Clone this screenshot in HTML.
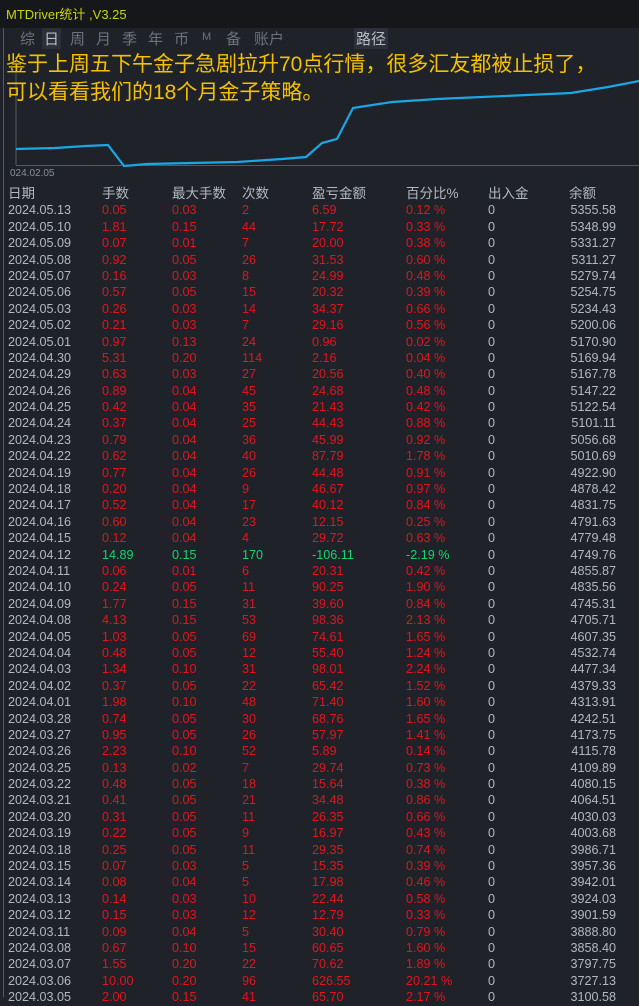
<!DOCTYPE html><html><head><meta charset="utf-8"><style>
body{margin:0;width:639px;height:997px;overflow:hidden;background:#1f2329;font-family:"Liberation Sans","Noto Sans CJK SC",sans-serif;position:relative}
.top{position:absolute;left:0;top:0;width:639px;height:28px;background:#15171b}
.ttl{position:absolute;left:6px;top:4px;font-size:13px;color:#c9d40a}
.tabs{position:absolute;left:20px;top:28px;font-size:15px;color:#6d727b}
.tabs span{position:absolute;top:0;white-space:nowrap}
.box{background:#2c3139;padding:0 2px;color:#b8bcc4}
.ov{position:absolute;left:6px;top:51px;font-size:21px;line-height:28px;color:#f5c000;white-space:nowrap}
.lbl{position:absolute;left:10px;top:168px;font-size:10px;color:#8a8f97}
.rows{position:absolute;left:0;top:186px;width:639px;font-size:12.6px}
.r{height:16.4px;line-height:16.4px;position:relative;color:#e3141c}
.r span{position:absolute;top:0}
.r .d{left:8px;color:#b3b8c0}.r .a{left:102px}.r .b{left:172px}.r .c{left:242px}.r .e{left:312px}.r .f{left:406px}.r .g{left:488px;color:#b3b8c0}.r .h{right:23px;color:#b3b8c0}
.hd{color:#b3b8c0;font-size:13.5px}.hd span{color:#b3b8c0}
.gr{color:#19d36b}
.lft{position:absolute;left:3px;top:28px;width:1px;height:969px;background:#55595f}
</style></head><body>
<div class="top"><div class="ttl">MTDriver统计 ,V3.25</div></div>
<div class="tabs"><span style="left:0">综</span><span class="box" style="left:22px">日</span><span style="left:50px">周</span><span style="left:76px">月</span><span style="left:102px">季</span><span style="left:128px">年</span><span style="left:154px">币</span><span style="left:182px;font-size:11px;top:3px">M</span><span style="left:206px">备</span><span style="left:234px">账户</span><span class="box" style="left:334px">路径</span></div>
<div class="lft"></div>
<svg style="position:absolute;left:0;top:0" width="639" height="180">
<line x1="16" y1="60" x2="16" y2="165" stroke="#555a62"/>
<line x1="16" y1="165.5" x2="639" y2="165.5" stroke="#555a62"/>
<polyline fill="none" stroke="#1aa7e6" stroke-width="2.2" points="16,149 55,148 86,146 108,145 124,166 147,164 192,163 237,162 282,159 306,157 322,143 337,139 353,108 392,102 437,99 482,97 527,95 571,93 608,87 639,81"/>
</svg>
<div class="ov">鉴于上周五下午金子急剧拉升70点行情，很多汇友都被止损了，<br>可以看看我们的18个月金子策略。</div>
<div class="lbl">024.02.05</div>
<div class="rows">
<div class="r hd"><span class="d">日期</span><span class="a">手数</span><span class="b">最大手数</span><span class="c">次数</span><span class="e">盈亏金额</span><span class="f">百分比%</span><span class="g">出入金</span><span style="left:569px">余额</span></div>
<div class="r"><span class="d">2024.05.13</span><span class="a">0.05</span><span class="b">0.03</span><span class="c">2</span><span class="e">6.59</span><span class="f">0.12 %</span><span class="g">0</span><span class="h">5355.58</span></div>
<div class="r"><span class="d">2024.05.10</span><span class="a">1.81</span><span class="b">0.15</span><span class="c">44</span><span class="e">17.72</span><span class="f">0.33 %</span><span class="g">0</span><span class="h">5348.99</span></div>
<div class="r"><span class="d">2024.05.09</span><span class="a">0.07</span><span class="b">0.01</span><span class="c">7</span><span class="e">20.00</span><span class="f">0.38 %</span><span class="g">0</span><span class="h">5331.27</span></div>
<div class="r"><span class="d">2024.05.08</span><span class="a">0.92</span><span class="b">0.05</span><span class="c">26</span><span class="e">31.53</span><span class="f">0.60 %</span><span class="g">0</span><span class="h">5311.27</span></div>
<div class="r"><span class="d">2024.05.07</span><span class="a">0.16</span><span class="b">0.03</span><span class="c">8</span><span class="e">24.99</span><span class="f">0.48 %</span><span class="g">0</span><span class="h">5279.74</span></div>
<div class="r"><span class="d">2024.05.06</span><span class="a">0.57</span><span class="b">0.05</span><span class="c">15</span><span class="e">20.32</span><span class="f">0.39 %</span><span class="g">0</span><span class="h">5254.75</span></div>
<div class="r"><span class="d">2024.05.03</span><span class="a">0.26</span><span class="b">0.03</span><span class="c">14</span><span class="e">34.37</span><span class="f">0.66 %</span><span class="g">0</span><span class="h">5234.43</span></div>
<div class="r"><span class="d">2024.05.02</span><span class="a">0.21</span><span class="b">0.03</span><span class="c">7</span><span class="e">29.16</span><span class="f">0.56 %</span><span class="g">0</span><span class="h">5200.06</span></div>
<div class="r"><span class="d">2024.05.01</span><span class="a">0.97</span><span class="b">0.13</span><span class="c">24</span><span class="e">0.96</span><span class="f">0.02 %</span><span class="g">0</span><span class="h">5170.90</span></div>
<div class="r"><span class="d">2024.04.30</span><span class="a">5.31</span><span class="b">0.20</span><span class="c">114</span><span class="e">2.16</span><span class="f">0.04 %</span><span class="g">0</span><span class="h">5169.94</span></div>
<div class="r"><span class="d">2024.04.29</span><span class="a">0.63</span><span class="b">0.03</span><span class="c">27</span><span class="e">20.56</span><span class="f">0.40 %</span><span class="g">0</span><span class="h">5167.78</span></div>
<div class="r"><span class="d">2024.04.26</span><span class="a">0.89</span><span class="b">0.04</span><span class="c">45</span><span class="e">24.68</span><span class="f">0.48 %</span><span class="g">0</span><span class="h">5147.22</span></div>
<div class="r"><span class="d">2024.04.25</span><span class="a">0.42</span><span class="b">0.04</span><span class="c">35</span><span class="e">21.43</span><span class="f">0.42 %</span><span class="g">0</span><span class="h">5122.54</span></div>
<div class="r"><span class="d">2024.04.24</span><span class="a">0.37</span><span class="b">0.04</span><span class="c">25</span><span class="e">44.43</span><span class="f">0.88 %</span><span class="g">0</span><span class="h">5101.11</span></div>
<div class="r"><span class="d">2024.04.23</span><span class="a">0.79</span><span class="b">0.04</span><span class="c">36</span><span class="e">45.99</span><span class="f">0.92 %</span><span class="g">0</span><span class="h">5056.68</span></div>
<div class="r"><span class="d">2024.04.22</span><span class="a">0.62</span><span class="b">0.04</span><span class="c">40</span><span class="e">87.79</span><span class="f">1.78 %</span><span class="g">0</span><span class="h">5010.69</span></div>
<div class="r"><span class="d">2024.04.19</span><span class="a">0.77</span><span class="b">0.04</span><span class="c">26</span><span class="e">44.48</span><span class="f">0.91 %</span><span class="g">0</span><span class="h">4922.90</span></div>
<div class="r"><span class="d">2024.04.18</span><span class="a">0.20</span><span class="b">0.04</span><span class="c">9</span><span class="e">46.67</span><span class="f">0.97 %</span><span class="g">0</span><span class="h">4878.42</span></div>
<div class="r"><span class="d">2024.04.17</span><span class="a">0.52</span><span class="b">0.04</span><span class="c">17</span><span class="e">40.12</span><span class="f">0.84 %</span><span class="g">0</span><span class="h">4831.75</span></div>
<div class="r"><span class="d">2024.04.16</span><span class="a">0.60</span><span class="b">0.04</span><span class="c">23</span><span class="e">12.15</span><span class="f">0.25 %</span><span class="g">0</span><span class="h">4791.63</span></div>
<div class="r"><span class="d">2024.04.15</span><span class="a">0.12</span><span class="b">0.04</span><span class="c">4</span><span class="e">29.72</span><span class="f">0.63 %</span><span class="g">0</span><span class="h">4779.48</span></div>
<div class="r gr"><span class="d">2024.04.12</span><span class="a">14.89</span><span class="b">0.15</span><span class="c">170</span><span class="e">-106.11</span><span class="f">-2.19 %</span><span class="g">0</span><span class="h">4749.76</span></div>
<div class="r"><span class="d">2024.04.11</span><span class="a">0.06</span><span class="b">0.01</span><span class="c">6</span><span class="e">20.31</span><span class="f">0.42 %</span><span class="g">0</span><span class="h">4855.87</span></div>
<div class="r"><span class="d">2024.04.10</span><span class="a">0.24</span><span class="b">0.05</span><span class="c">11</span><span class="e">90.25</span><span class="f">1.90 %</span><span class="g">0</span><span class="h">4835.56</span></div>
<div class="r"><span class="d">2024.04.09</span><span class="a">1.77</span><span class="b">0.15</span><span class="c">31</span><span class="e">39.60</span><span class="f">0.84 %</span><span class="g">0</span><span class="h">4745.31</span></div>
<div class="r"><span class="d">2024.04.08</span><span class="a">4.13</span><span class="b">0.15</span><span class="c">53</span><span class="e">98.36</span><span class="f">2.13 %</span><span class="g">0</span><span class="h">4705.71</span></div>
<div class="r"><span class="d">2024.04.05</span><span class="a">1.03</span><span class="b">0.05</span><span class="c">69</span><span class="e">74.61</span><span class="f">1.65 %</span><span class="g">0</span><span class="h">4607.35</span></div>
<div class="r"><span class="d">2024.04.04</span><span class="a">0.48</span><span class="b">0.05</span><span class="c">12</span><span class="e">55.40</span><span class="f">1.24 %</span><span class="g">0</span><span class="h">4532.74</span></div>
<div class="r"><span class="d">2024.04.03</span><span class="a">1.34</span><span class="b">0.10</span><span class="c">31</span><span class="e">98.01</span><span class="f">2.24 %</span><span class="g">0</span><span class="h">4477.34</span></div>
<div class="r"><span class="d">2024.04.02</span><span class="a">0.37</span><span class="b">0.05</span><span class="c">22</span><span class="e">65.42</span><span class="f">1.52 %</span><span class="g">0</span><span class="h">4379.33</span></div>
<div class="r"><span class="d">2024.04.01</span><span class="a">1.98</span><span class="b">0.10</span><span class="c">48</span><span class="e">71.40</span><span class="f">1.60 %</span><span class="g">0</span><span class="h">4313.91</span></div>
<div class="r"><span class="d">2024.03.28</span><span class="a">0.74</span><span class="b">0.05</span><span class="c">30</span><span class="e">68.76</span><span class="f">1.65 %</span><span class="g">0</span><span class="h">4242.51</span></div>
<div class="r"><span class="d">2024.03.27</span><span class="a">0.95</span><span class="b">0.05</span><span class="c">26</span><span class="e">57.97</span><span class="f">1.41 %</span><span class="g">0</span><span class="h">4173.75</span></div>
<div class="r"><span class="d">2024.03.26</span><span class="a">2.23</span><span class="b">0.10</span><span class="c">52</span><span class="e">5.89</span><span class="f">0.14 %</span><span class="g">0</span><span class="h">4115.78</span></div>
<div class="r"><span class="d">2024.03.25</span><span class="a">0.13</span><span class="b">0.02</span><span class="c">7</span><span class="e">29.74</span><span class="f">0.73 %</span><span class="g">0</span><span class="h">4109.89</span></div>
<div class="r"><span class="d">2024.03.22</span><span class="a">0.48</span><span class="b">0.05</span><span class="c">18</span><span class="e">15.64</span><span class="f">0.38 %</span><span class="g">0</span><span class="h">4080.15</span></div>
<div class="r"><span class="d">2024.03.21</span><span class="a">0.41</span><span class="b">0.05</span><span class="c">21</span><span class="e">34.48</span><span class="f">0.86 %</span><span class="g">0</span><span class="h">4064.51</span></div>
<div class="r"><span class="d">2024.03.20</span><span class="a">0.31</span><span class="b">0.05</span><span class="c">11</span><span class="e">26.35</span><span class="f">0.66 %</span><span class="g">0</span><span class="h">4030.03</span></div>
<div class="r"><span class="d">2024.03.19</span><span class="a">0.22</span><span class="b">0.05</span><span class="c">9</span><span class="e">16.97</span><span class="f">0.43 %</span><span class="g">0</span><span class="h">4003.68</span></div>
<div class="r"><span class="d">2024.03.18</span><span class="a">0.25</span><span class="b">0.05</span><span class="c">11</span><span class="e">29.35</span><span class="f">0.74 %</span><span class="g">0</span><span class="h">3986.71</span></div>
<div class="r"><span class="d">2024.03.15</span><span class="a">0.07</span><span class="b">0.03</span><span class="c">5</span><span class="e">15.35</span><span class="f">0.39 %</span><span class="g">0</span><span class="h">3957.36</span></div>
<div class="r"><span class="d">2024.03.14</span><span class="a">0.08</span><span class="b">0.04</span><span class="c">5</span><span class="e">17.98</span><span class="f">0.46 %</span><span class="g">0</span><span class="h">3942.01</span></div>
<div class="r"><span class="d">2024.03.13</span><span class="a">0.14</span><span class="b">0.03</span><span class="c">10</span><span class="e">22.44</span><span class="f">0.58 %</span><span class="g">0</span><span class="h">3924.03</span></div>
<div class="r"><span class="d">2024.03.12</span><span class="a">0.15</span><span class="b">0.03</span><span class="c">12</span><span class="e">12.79</span><span class="f">0.33 %</span><span class="g">0</span><span class="h">3901.59</span></div>
<div class="r"><span class="d">2024.03.11</span><span class="a">0.09</span><span class="b">0.04</span><span class="c">5</span><span class="e">30.40</span><span class="f">0.79 %</span><span class="g">0</span><span class="h">3888.80</span></div>
<div class="r"><span class="d">2024.03.08</span><span class="a">0.67</span><span class="b">0.10</span><span class="c">15</span><span class="e">60.65</span><span class="f">1.60 %</span><span class="g">0</span><span class="h">3858.40</span></div>
<div class="r"><span class="d">2024.03.07</span><span class="a">1.55</span><span class="b">0.20</span><span class="c">22</span><span class="e">70.62</span><span class="f">1.89 %</span><span class="g">0</span><span class="h">3797.75</span></div>
<div class="r"><span class="d">2024.03.06</span><span class="a">10.00</span><span class="b">0.20</span><span class="c">96</span><span class="e">626.55</span><span class="f">20.21 %</span><span class="g">0</span><span class="h">3727.13</span></div>
<div class="r"><span class="d">2024.03.05</span><span class="a">2.00</span><span class="b">0.15</span><span class="c">41</span><span class="e">65.70</span><span class="f">2.17 %</span><span class="g">0</span><span class="h">3100.58</span></div>
</div>
</body></html>
